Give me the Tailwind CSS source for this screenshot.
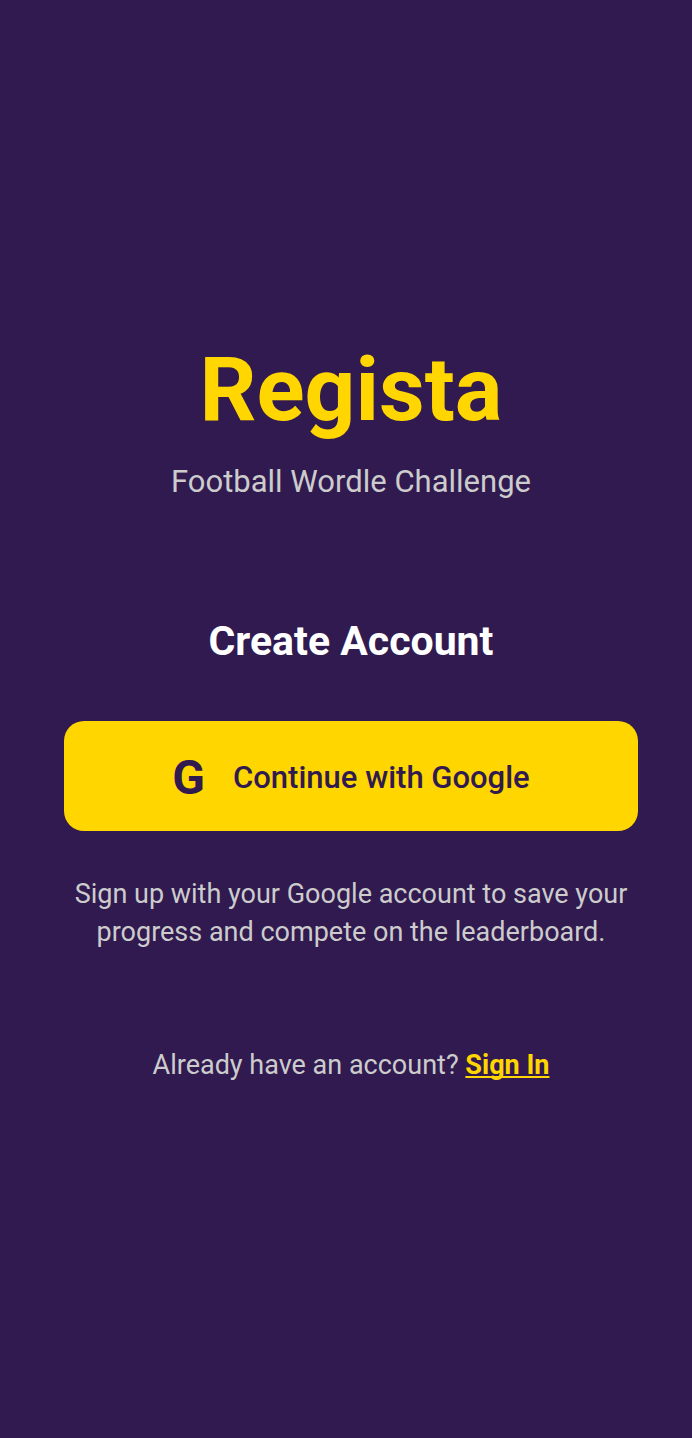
<!DOCTYPE html>
<html lang="en">
<head>
    <meta charset="UTF-8">
    <meta name="viewport" content="width=device-width, initial-scale=1.0">
    <title>Regista - Create Account</title>
    <meta name="theme-color" content="#301a50">
    <script src="https://cdn.jsdelivr.net/npm/@tailwindcss/browser@4"></script>
</head>
<body class="bg-[#301a50] font-['Roboto',sans-serif]">
    <main class="flex min-h-screen flex-col items-center justify-center pb-[18px] pl-16 pr-[54px] text-center text-[#cccccc]">
        <header class="mb-[115px]">
            <h1 class="text-[89px] leading-[106px] font-bold text-[#ffd600]">Regista</h1>
            <p class="mt-5 text-[31px] leading-[38px]">Football Wordle Challenge</p>
        </header>

        <section class="w-full">
            <h2 class="mb-[55px] text-[41px] leading-[50px] font-bold text-white">Create Account</h2>
            <button type="button" class="flex w-full items-center justify-center gap-7 rounded-[20px] bg-[#ffd600] pt-[30px] pb-[26px] text-[#301a50]">
                <span class="text-[48px] leading-[54px] font-bold" aria-hidden="true">G</span>
                <span class="text-[31px] leading-[38px] font-medium">Continue with Google</span>
            </button>
            <p class="mt-11 text-[27px] leading-[38px]">Sign up with your Google account to save your progress and compete on the leaderboard.</p>
        </section>

        <p class="mt-[95px] text-[27px] leading-[38px]">
            Already have an account?
            <a href="#" class="font-bold text-[#ffd600] underline decoration-2 underline-offset-2 [text-decoration-skip-ink:none]">Sign In</a>
        </p>
    </main>
</body>
</html>
